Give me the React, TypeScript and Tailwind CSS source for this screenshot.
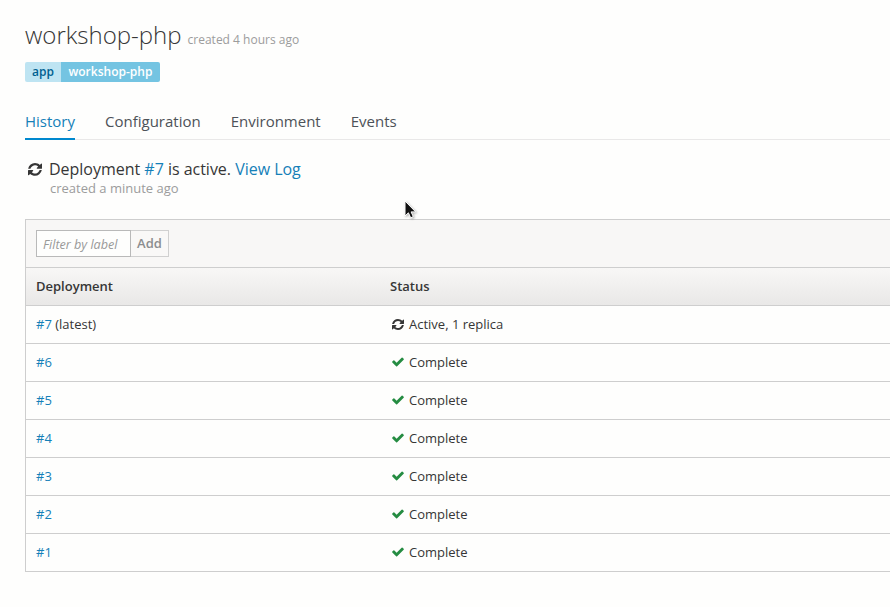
import React from "react";

function RefreshIcon({ className }: { className: string }) {
  return (
    <svg viewBox="0 128 1536 1536" fill="currentColor" className={className} aria-hidden="true">
      <path d="M1511 928q0 5-1 7-64 268-268 434.5t-478 166.5q-146 0-282.5-55t-243.5-157l-129 129q-19 19-45 19t-45-19-19-45v-448q0-26 19-45t45-19h448q26 0 45 19t19 45-19 45l-137 137q71 66 161 102t187 36q134 0 250-65t186-179q11-17 53-117 8-23 30-23h192q13 0 22.5 9.5t9.5 22.5zM1536 256v448q0 26-19 45t-45 19h-448q-26 0-45-19t-19-45 19-45l138-138q-148-137-349-137-134 0-250 65t-186 179q-11 17-53 117-8 23-30 23h-199q-13 0-22.5-9.5t-9.5-22.5v-7q65-268 270-434.5t480-166.5q146 0 284 55.5t245 156.5l130-129q19-19 45-19t45 19 19 45z" />
    </svg>
  );
}

function CheckIcon() {
  return (
    <svg viewBox="121 270 1550 1252" fill="currentColor" className="mb-px ml-0.5 mr-[5px] h-[9.5px] w-3 text-[#258c42]" aria-hidden="true">
      <path d="M1671 566q0 40-28 68l-724 724-136 136q-28 28-68 28t-68-28l-136-136-362-362q-28-28-28-68t28-68l136-136q28-28 68-28t68 28l294 295 656-657q28-28 68-28t68 28l136 136q28 28 28 68z" />
    </svg>
  );
}

function Cursor() {
  return (
    <svg viewBox="0 0 14 20" className="absolute left-[404px] top-[200px] h-5 w-3.5 drop-shadow-[1px_1px_1px_rgba(0,0,0,0.3)]" aria-hidden="true">
      <path d="M1 1v15l3.4-3.2 2.3 5 2.6-1.2-2.2-4.7h4.6z" fill="#111" stroke="#fff" strokeWidth="1" />
    </svg>
  );
}

const tabs = ["History", "Configuration", "Environment", "Events"];
const deployments = [7, 6, 5, 4, 3, 2, 1];

export default function App() {
  return (
    <div className="relative h-[607px] w-[890px] overflow-hidden bg-[#fefefd] pl-[25px] pt-[17px] font-['Open_Sans',sans-serif] text-[13px] text-[#363636]">
      <h1 className="flex h-9 items-baseline whitespace-nowrap text-[24px] font-light leading-9">
        workshop-php
        <small className="ml-1.5 text-[12px] font-normal text-[#9c9c9c]">created 4 hours ago</small>
      </h1>
      <div className="mt-[9px] flex h-5 text-[12px] font-semibold leading-5">
        <span className="w-9 rounded-l-[2px] bg-[#bee4f2] pl-[7px] text-[#006090]">app</span>
        <span className="w-[99px] rounded-r-[2px] bg-[#74c4e2] pl-[7.5px] text-white">workshop-php</span>
      </div>
      <nav className="mt-[22px] flex h-9 gap-[30px] border-b border-[#e9e8e8] text-[15px] leading-[34px] text-[#4d5258]">
        {tabs.map((tab, i) => (
          <a key={tab} className={i === 0 ? "h-9 border-b-2 border-[#0088ce] text-[#1580b8]" : "h-9"}>
            {tab}
          </a>
        ))}
      </nav>
      <div className="mt-[17px] flex h-6 items-center whitespace-pre text-[16px] leading-6 tracking-[-0.02px]">
        <RefreshIcon className="ml-[3px] mr-[7px] mt-px size-[14px]" />
        <span>
          Deployment <a className="text-[#1580b8]">#7</a> is active. <a className="text-[#1580b8]">View Log</a>
        </span>
      </div>
      <p className="ml-[25px] h-[18px] text-[13px] leading-[15px] text-[#9c9c9c]">created a minute ago</p>

      <section className="mt-5 w-[900px] border border-[#cecece]">
        <div className="flex h-[47px] items-start bg-[#f8f7f6] pl-2.5 pt-2.5">
          <input
            placeholder="Filter by label"
            className="h-[27px] w-[95px] border border-[#b9b9b9] bg-[#fefefd] pl-1.5 pt-0.5 text-[12.6px] italic placeholder:text-[#999]"
          />
          <button className="h-[27px] w-[38px] border border-l-0 border-[#d0d0d0] bg-[#f9f8f7] text-[13px] font-semibold leading-[25px] text-[#8b8d8f]">Add</button>
        </div>
        <div className="grid h-[38px] grid-cols-[354px_1fr] border-t border-[#cecece] bg-linear-to-b from-[#f8f7f6] to-[#e9e8e7] pl-2.5 font-semibold leading-[37px]">
          <span>Deployment</span>
          <span>Status</span>
        </div>
        {deployments.map((n) => (
          <div key={n} className="grid h-[38px] grid-cols-[354px_1fr] border-t border-[#cecece] pl-2.5 leading-[37px]">
            <span>
              <a className="text-[#1580b8]">#{n}</a>
              {n === 7 && " (latest)"}
            </span>
            <span className="flex items-center">
              {n === 7 ? <RefreshIcon className="ml-0.5 mr-[5px] size-3" /> : <CheckIcon />}
              {n === 7 ? "Active, 1 replica" : "Complete"}
            </span>
          </div>
        ))}
      </section>
      <Cursor />
    </div>
  );
}
